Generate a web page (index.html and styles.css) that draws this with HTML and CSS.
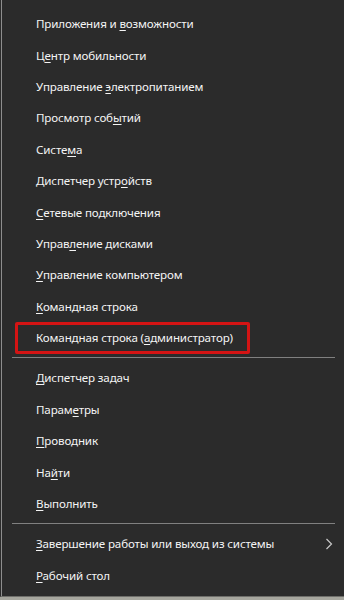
FILE: index.html
```html
<!DOCTYPE html>
<html lang="ru">
<head>
<meta charset="utf-8">
<title>Win+X</title>
<link rel="stylesheet" href="styles.css">
</head>
<body>
<div class="menu">
  <div class="item"><span>Приложения и <span class="ak">в</span>озможности</span></div>
  <div class="item"><span>Ц<span class="ak">е</span>нтр мобильности</span></div>
  <div class="item"><span>Управление <span class="ak">э</span>лектропитанием</span></div>
  <div class="item"><span>Просмотр соб<span class="ak">ы</span>тий</span></div>
  <div class="item"><span>Систе<span class="ak">м</span>а</span></div>
  <div class="item"><span>Диспетчер устр<span class="ak">о</span>йств</span></div>
  <div class="item"><span><span class="ak">С</span>етевые подключения</span></div>
  <div class="item"><span>Управ<span class="ak">л</span>ение дисками</span></div>
  <div class="item"><span><span class="ak">У</span>правление компьютером</span></div>
  <div class="item"><span><span class="ak">К</span>омандная строка</span></div>
  <div class="item item-marked"><span class="mark"><span>Командная строка (<span class="ak">а</span>дминистратор)</span></span></div>
  <div class="sep"></div>
  <div class="item"><span><span class="ak">Д</span>испетчер задач</span></div>
  <div class="item"><span>Парам<span class="ak">е</span>тры</span></div>
  <div class="item"><span><span class="ak">П</span>роводник</span></div>
  <div class="item"><span>На<span class="ak">й</span>ти</span></div>
  <div class="item"><span><span class="ak">В</span>ыполнить</span></div>
  <div class="sep"></div>
  <div class="item"><span><span class="ak">З</span>авершение работы или выход из системы</span>
    <svg class="chev" width="8" height="12" viewBox="0 0 8 12"><polyline points="1.5,1 6.5,6 1.5,11" fill="none" stroke="#c8c8c8" stroke-width="1.2"/></svg>
  </div>
  <div class="item"><span><span class="ak">Р</span>абочий стол</span></div>
</div>
</body>
</html>
```

FILE: styles.css
```css
html, body {
  margin: 0;
  padding: 0;
}
body {
  background: #a6a69e;
  width: 344px;
  height: 600px;
  overflow: hidden;
  font-family: "Noto Sans", "Open Sans", sans-serif;
  font-size: 11.6px;
  letter-spacing: -0.15px;
  color: #f4f4f4;
}
.menu {
  box-sizing: border-box;
  height: 597px;
  background: #2b2b2b;
  border-left: 1px solid #2b2b2b;
  box-shadow: inset 1px 0 0 #8e8e8e;
  border-bottom: 1px solid #6e6e6a;
  padding-top: 8px;
}
.item {
  height: 31.4px;
  display: flex;
  align-items: center;
  padding-left: 35px;
  padding-right: 10px;
  white-space: nowrap;
}
.ak {
  text-decoration: underline;
  text-underline-offset: 2px;
  text-decoration-thickness: 1px;
}
.item-marked {
  padding-left: 14px;
}
.mark {
  box-sizing: border-box;
  width: 235px;
  height: 32px;
  border: 3px solid #d41414;
  border-radius: 2px;
  display: flex;
  align-items: center;
  padding-left: 18px;
}
.sep {
  height: 1px;
  margin: 4px 9px 4px 11px;
  background: #808080;
}
.chev {
  margin-left: auto;
  margin-right: 1px;
}
```
